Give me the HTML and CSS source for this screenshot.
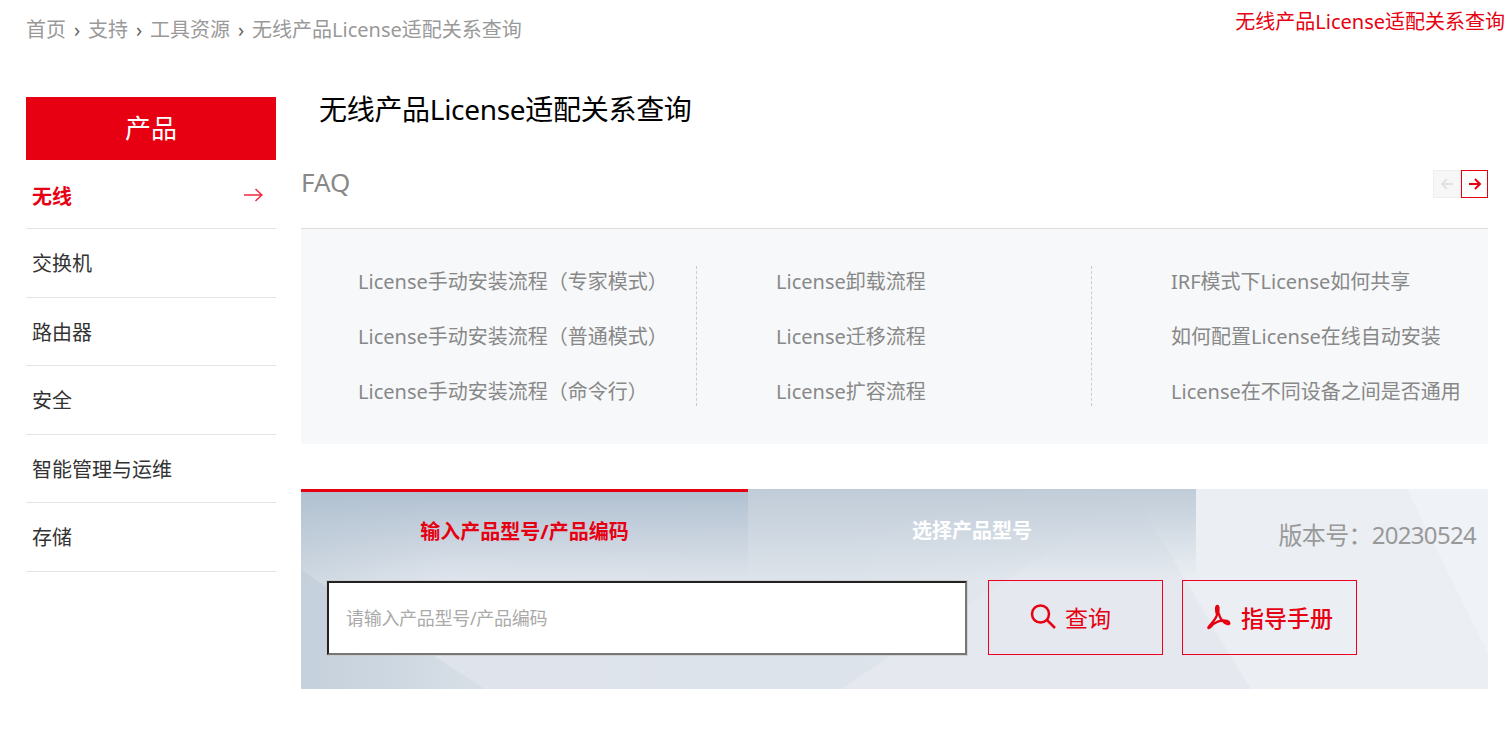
FILE: index.html
```html
<!DOCTYPE html>
<html lang="zh-CN">
<head>
    <meta charset="UTF-8">
    <meta name="viewport" content="width=device-width, initial-scale=1.0">
    <title>无线产品License适配关系查询</title>
    <link rel="stylesheet" href="styles.css">
</head>
<body>
    <div class="page-flag">无线产品License适配关系查询</div>
    <div class="crumbs">
        <a>首页</a><span class="sep">›</span>
        <a>支持</a><span class="sep">›</span>
        <a>工具资源</a><span class="sep">›</span>
        <a>无线产品License适配关系查询</a>
    </div>
    <div class="layout">
        <aside class="side">
            <div class="side-head">产品</div>
            <ul class="side-list">
                <li class="active">
                    <span>无线</span>
                    <svg class="side-arrow" viewBox="0 0 20 14" width="20" height="14"><path d="M1 7H19M12.5 1L19 7L12.5 13" fill="none" stroke="#f0283c" stroke-width="1.5"/></svg>
                </li>
                <li><span>交换机</span></li>
                <li><span>路由器</span></li>
                <li><span>安全</span></li>
                <li><span>智能管理与运维</span></li>
                <li><span>存储</span></li>
            </ul>
        </aside>
        <main class="content">
            <h1>无线产品License适配关系查询</h1>
            <div class="faq-head">
                <h2>FAQ</h2>
                <div class="pager">
                    <button class="prev"><svg viewBox="0 0 14 14" width="14" height="14"><path d="M13 7H2M7 2L2 7L7 12" fill="none" stroke="#e2e2e2" stroke-width="2"/></svg></button>
                    <button class="next"><svg viewBox="0 0 14 14" width="14" height="14"><path d="M1 7H12M7 2L12 7L7 12" fill="none" stroke="#e60012" stroke-width="2"/></svg></button>
                </div>
            </div>
            <div class="faq-panel">
                <ul class="faq-col col-a">
                    <li>License手动安装流程（专家模式）</li>
                    <li>License手动安装流程（普通模式）</li>
                    <li>License手动安装流程（命令行）</li>
                </ul>
                <ul class="faq-col col-b">
                    <li>License卸载流程</li>
                    <li>License迁移流程</li>
                    <li>License扩容流程</li>
                </ul>
                <ul class="faq-col col-c">
                    <li>IRF模式下License如何共享</li>
                    <li>如何配置License在线自动安装</li>
                    <li>License在不同设备之间是否通用</li>
                </ul>
            </div>
            <section class="query">
                <svg class="query-bg" viewBox="0 0 1187 200" width="1187" height="200">
                    <defs>
                        <linearGradient id="base" x1="0" y1="0" x2="1" y2="0">
                            <stop offset="0" stop-color="#ced8e1"/>
                            <stop offset="0.12" stop-color="#dfe4ec"/>
                            <stop offset="0.45" stop-color="#dde3ea"/>
                            <stop offset="0.75" stop-color="#e6eaf0"/>
                            <stop offset="1" stop-color="#ecf0f4"/>
                        </linearGradient>
                        <linearGradient id="corner" x1="0" y1="0" x2="1" y2="0">
                            <stop offset="0" stop-color="#c4d0db"/>
                            <stop offset="1" stop-color="#d8dfe7"/>
                        </linearGradient>
                    </defs>
                    <rect width="1187" height="200" fill="url(#base)"/>
                    <polygon points="0,81 184,200 0,200" fill="url(#corner)"/>
                    <polygon points="540,200 810,22 880,93 950,200" fill="#e5e9ef"/>
                    <polygon points="830,0 1187,0 1187,200 950,200" fill="#ebeff3"/>
                    <polygon points="1106,0 1187,0 1187,165" fill="#eff2f6"/>
                </svg>
                <div class="tabs">
                    <div class="tab on">输入产品型号/产品编码</div>
                    <div class="tab">选择产品型号</div>
                    <div class="version">版本号：20230524</div>
                </div>
                <div class="search-row">
                    <input class="search-input" type="text" placeholder="请输入产品型号/产品编码">
                    <button class="act act-search">
                        <svg viewBox="0 0 26 26" width="26" height="26"><circle cx="10.5" cy="10" r="8.5" fill="none" stroke="#e60012" stroke-width="2.5"/><path d="M17 16L25 24" stroke="#e60012" stroke-width="2.5" fill="none"/></svg>
                        <span>查询</span>
                    </button>
                    <button class="act act-guide">
                        <svg viewBox="0 0 26 26" width="26" height="26"><path d="M11.5 2C9.5 2 10 7 11 10C11.5 13 6 19 3 22.5C1.5 24.5 3 24.5 4.5 23C8 18 15 15.5 21 17C24 18 24 20.5 21.5 20C17 19 14 14 12.5 9C12 6.5 13 2 11.5 2Z" fill="none" stroke="#e60012" stroke-width="2.4" stroke-linejoin="round"/></svg>
                        <span>指导手册</span>
                    </button>
                </div>
            </section>
        </main>
    </div>
</body>
</html>
```

FILE: styles.css
```css
* {
    box-sizing: border-box;
}
body {
    margin: 0;
    font-family: "Noto Sans", "Noto Sans CJK SC", sans-serif;
    background-color: #ffffff;
    color: #333333;
    height: 732px;
    overflow: hidden;
    position: relative;
}
ul {
    list-style: none;
    margin: 0;
    padding: 0;
}
.page-flag {
    position: absolute;
    top: 8px;
    right: 6px;
    font-size: 20px;
    line-height: 28px;
    color: #e60012;
}
.crumbs {
    display: flex;
    padding: 16px 0 0 26px;
    height: 97px;
    font-size: 20px;
    line-height: 28px;
    color: #999999;
}
.crumbs .sep {
    width: 22px;
    text-align: center;
    color: #666666;
}
.layout {
    display: flex;
    padding-left: 26px;
}
.side {
    width: 250px;
    flex: none;
}
.side-head {
    height: 63px;
    line-height: 63px;
    background-color: #e60012;
    color: #ffffff;
    font-size: 26px;
    text-align: center;
}
.side-list {
    padding-top: 0.5px;
}
.side-list li {
    height: 68.5px;
    border-bottom: 1px solid #e4e4e4;
    padding: 0 13px 0 6px;
    display: flex;
    align-items: center;
    justify-content: space-between;
    font-size: 20px;
    color: #333333;
}
.side-list .active {
    color: #e60012;
    font-weight: bold;
    padding-top: 2px;
}
.content {
    width: 1187px;
    margin-left: 25px;
}
h1 {
    margin: 0;
    padding-left: 18px;
    height: 66px;
    font-size: 28px;
    line-height: 25px;
    letter-spacing: -0.3px;
    font-weight: normal;
    color: #000000;
}
.faq-head {
    display: flex;
    justify-content: space-between;
    align-items: flex-start;
    height: 65px;
}
h2 {
    margin: 0;
    font-size: 26px;
    line-height: 38px;
    font-weight: normal;
    color: #888888;
}
.pager {
    display: flex;
    margin-top: 7px;
}
.pager button {
    width: 27px;
    height: 28px;
    padding: 0;
    background: #ffffff;
    display: flex;
    align-items: center;
    justify-content: center;
}
.pager .prev {
    width: 28px;
    background: #f7f7f7;
    border: 1px solid #eeeeee;
}
.pager .next {
    border: 1px solid #e60012;
}
.faq-panel {
    height: 216px;
    border-top: 1px solid #dddddd;
    background-color: #f7f8fa;
    display: flex;
    padding-top: 37px;
    font-size: 20px;
    color: #888888;
}
.faq-col {
    height: 140px;
    white-space: nowrap;
}
.faq-col li {
    height: 55px;
    line-height: 32px;
}
.col-a {
    width: 395px;
    padding-left: 57px;
}
.col-b {
    width: 395px;
    padding-left: 79px;
    border-left: 1px dashed #cccccc;
}
.col-c {
    padding-left: 79px;
    border-left: 1px dashed #cccccc;
}
.query {
    position: relative;
    height: 200px;
    margin-top: 45px;
}
.query-bg {
    position: absolute;
    top: 0;
    left: 0;
}
.tabs {
    position: relative;
    display: flex;
    height: 91px;
}
.tab {
    width: 448px;
    height: 91px;
    padding-top: 26px;
    line-height: 32px;
    text-align: center;
    font-size: 20px;
    font-weight: bold;
    color: #ffffff;
    background: linear-gradient(to bottom, #c0ccd8, rgba(222, 228, 236, 0));
}
.tab.on {
    width: 447px;
    border-top: 3px solid #e60012;
    padding-top: 24px;
    color: #e60012;
    background: linear-gradient(to bottom, #b1c1d1, rgba(222, 228, 236, 0));
}
.version {
    flex: 1;
    padding: 28px 12px 0 0;
    text-align: right;
    font-size: 24px;
    line-height: 36px;
    letter-spacing: -0.7px;
    color: #999999;
}
.search-row {
    position: relative;
    display: flex;
    align-items: flex-start;
    padding-left: 26px;
}
.search-input {
    width: 640px;
    height: 74px;
    margin: 1px 1px 0 0;
    border-width: 2px;
    border-style: solid;
    border-color: #222222 #777777 #777777 #222222;
    box-shadow: 0 0 0 1px rgba(200, 200, 200, 0.7);
    background: #ffffff;
    padding: 0 17px;
    font-family: inherit;
    font-size: 18px;
    outline: none;
}
.search-input::placeholder {
    color: #aaaaaa;
    letter-spacing: -0.3px;
}
.act {
    width: 175px;
    height: 75px;
    margin-left: 20px;
    border: 1px solid #f00020;
    background: transparent;
    display: flex;
    align-items: center;
    justify-content: center;
    gap: 9px;
    font-family: inherit;
    font-size: 23px;
    color: #e60012;
    padding: 0 0 2px;
}
.act-search {
    padding-right: 10px;
}
.act-guide {
    margin-left: 19px;
    font-weight: 500;
}
```
